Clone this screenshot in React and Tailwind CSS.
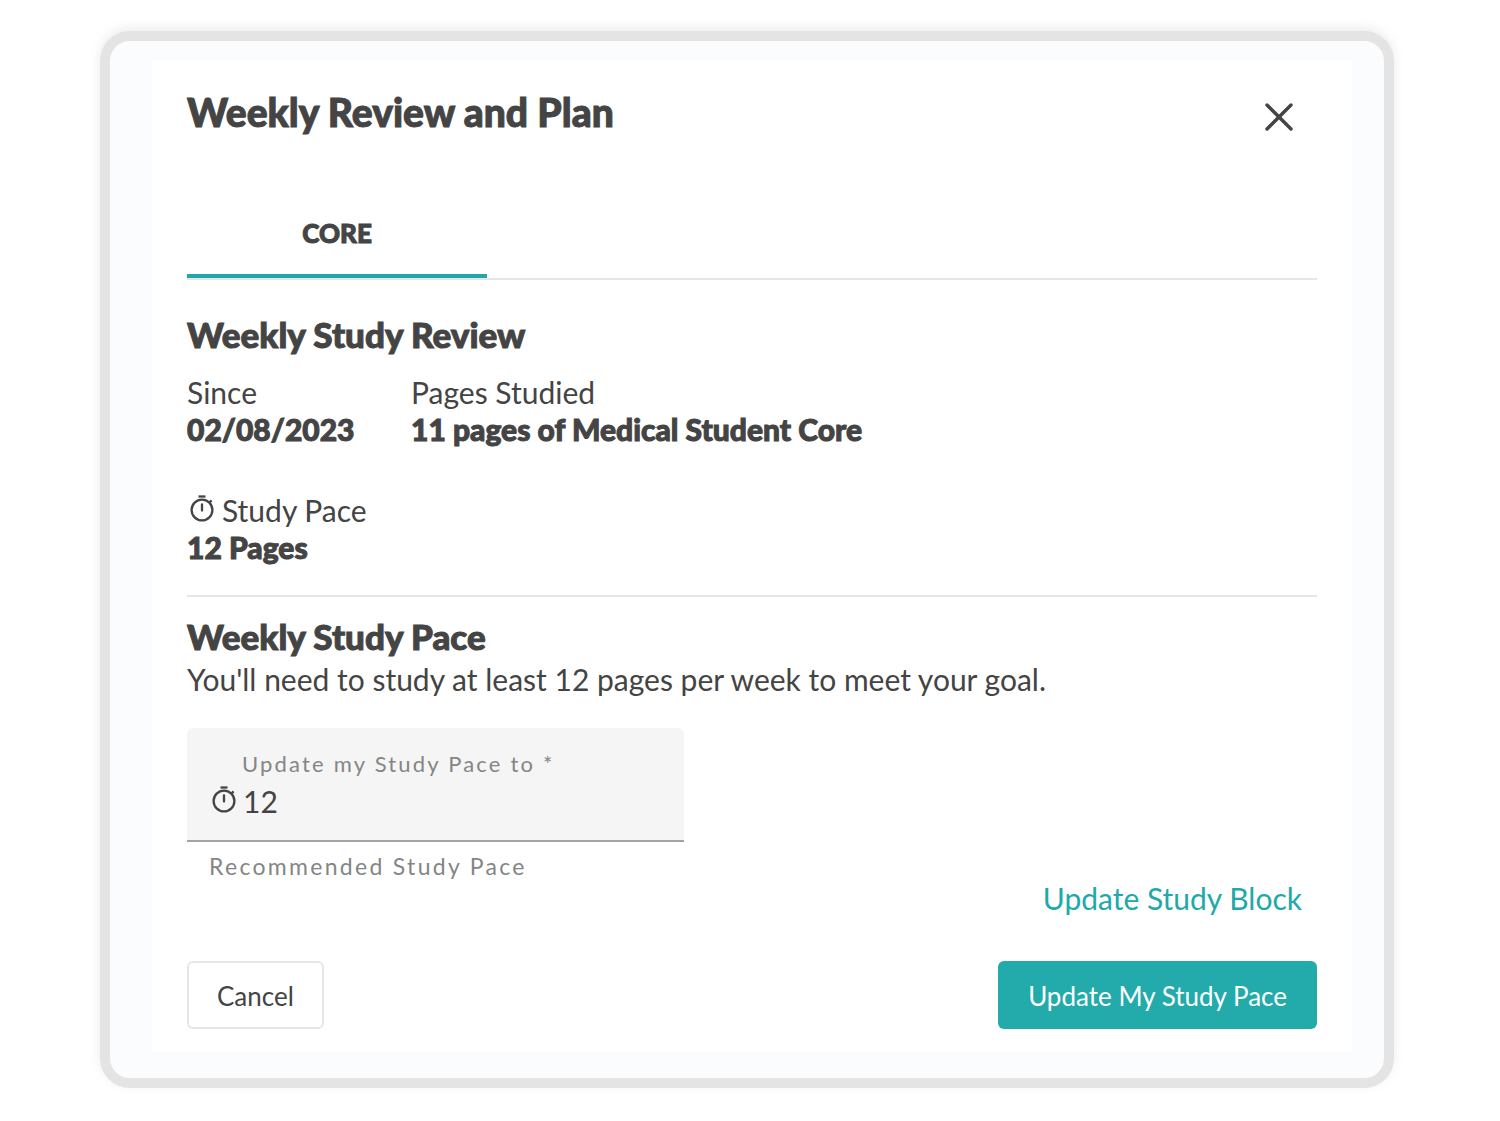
import { useState } from 'react';
import { X } from 'lucide-react';

const StopwatchIcon = () => (
  <svg
    width="26"
    height="32"
    viewBox="0 0 26 32"
    fill="none"
    stroke="currentColor"
    strokeWidth="2.3"
    className="shrink-0"
    aria-hidden="true"
  >
    <circle cx="13" cy="15" r="10.4" />
    <path d="M9.5 1.5h7" />
    <path d="M13 9.5v6" strokeLinecap="round" />
    <path d="M20 8l2.6-2.6" />
  </svg>
);

// Lato has no weight above bold here, the thin stroke makes it heavier
const heavy = 'font-black [-webkit-text-stroke:1px_currentColor]';

const Stat = ({ label, value, icon }) => (
  <div>
    <dt className="flex items-center gap-[7px]">
      {icon && <span className="ml-0.5">{icon}</span>}
      {label}
    </dt>
    <dd className={heavy}>{value}</dd>
  </div>
);

const WeeklyReview = () => (
  <section className="mt-[33px]">
    <h2 className={`text-[35px] leading-[42px] ${heavy}`}>Weekly Study Review</h2>
    <dl className="mt-[19px] grid grid-cols-[224px_1fr] gap-y-11">
      <Stat label="Since" value="02/08/2023" />
      <Stat label="Pages Studied" value="11 pages of Medical Student Core" />
      <Stat label="Study Pace" value="12 Pages" icon={<StopwatchIcon />} />
    </dl>
  </section>
);

const PaceField = () => {
  const [pace, setPace] = useState('12');

  return (
    <div className="mt-[30px] max-w-[497px]">
      <div className="rounded-t-md border-b-2 border-[#a3a3a3] bg-[#f5f5f5] pt-[22px] pb-5 pl-6">
        <label
          htmlFor="pace"
          className="block pl-[31px] text-[22px] leading-7 tracking-widest text-[#858585]"
        >
          Update my Study Pace to *
        </label>
        <div className="mt-[5px] flex items-center gap-[6px]">
          <StopwatchIcon />
          <input
            id="pace"
            type="text"
            inputMode="numeric"
            required
            aria-describedby="pace-hint"
            value={pace}
            onChange={(e) => setPace(e.target.value)}
            className="h-[37px] min-w-0 flex-1 bg-transparent outline-none"
          />
        </div>
      </div>
      <p id="pace-hint" className="mt-[10px] pl-[22px] text-[23px] leading-7 tracking-widest text-[#858585]">
        Recommended Study Pace
      </p>
    </div>
  );
};

const App = () => {
  return (
    <main className="min-h-screen bg-white pt-[31px] pr-[106px] pb-[33px] pl-[100px] font-['Lato',sans-serif] text-[30px] leading-[37px] text-[#444444]">
      <div className="rounded-[30px] border-10 border-[#e4e4e4] bg-[#fbfcfe] pt-[19px] pr-8 pb-[26px] pl-[42px] shadow-[0_-3px_12px_rgba(0,0,0,0.08)]">
        <div className="bg-white px-[35px] pb-[23px]">
          <header className="flex items-start justify-between pt-[29px]">
            <h1 className={`text-[39px] leading-[46px] ${heavy}`}>Weekly Review and Plan</h1>
            <button type="button" aria-label="Close" className="mt-1 mr-[14px]">
              <X size={48} strokeWidth={1.7} />
            </button>
          </header>

          <div role="tablist" className="mt-[52px] flex border-b-2 border-[#e6e6e6]">
            <button
              type="button"
              role="tab"
              aria-selected="true"
              className={`h-[85px] w-[300px] border-b-4 border-[#20a9a8] text-[26px] ${heavy}`}
            >
              CORE
            </button>
          </div>

          <WeeklyReview />

          <hr className="mt-[29px] border-t-2 border-[#e6e6e6]" />

          <form onSubmit={(e) => e.preventDefault()}>
            <h2 className={`mt-[18px] text-[35px] leading-[42px] ${heavy}`}>Weekly Study Pace</h2>
            <p className="mt-1">You'll need to study at least 12 pages per week to meet your goal.</p>
            <PaceField />

            <div className="flex justify-end pr-[15px]">
              <a href="#study-block" className="text-[#20a9a8]">
                Update Study Block
              </a>
            </div>

            <div className="mt-11 flex items-center justify-between">
              <button
                type="button"
                className="h-[68px] rounded-md border-2 border-[#e6e6e6] px-7 pt-0.5 text-[26px]"
              >
                Cancel
              </button>
              <button
                type="submit"
                className="h-[68px] rounded-md bg-[#22abaa] px-[30px] pt-0.5 text-[26px] text-white"
              >
                Update My Study Pace
              </button>
            </div>
          </form>
        </div>
      </div>
    </main>
  );
};

export default App;
